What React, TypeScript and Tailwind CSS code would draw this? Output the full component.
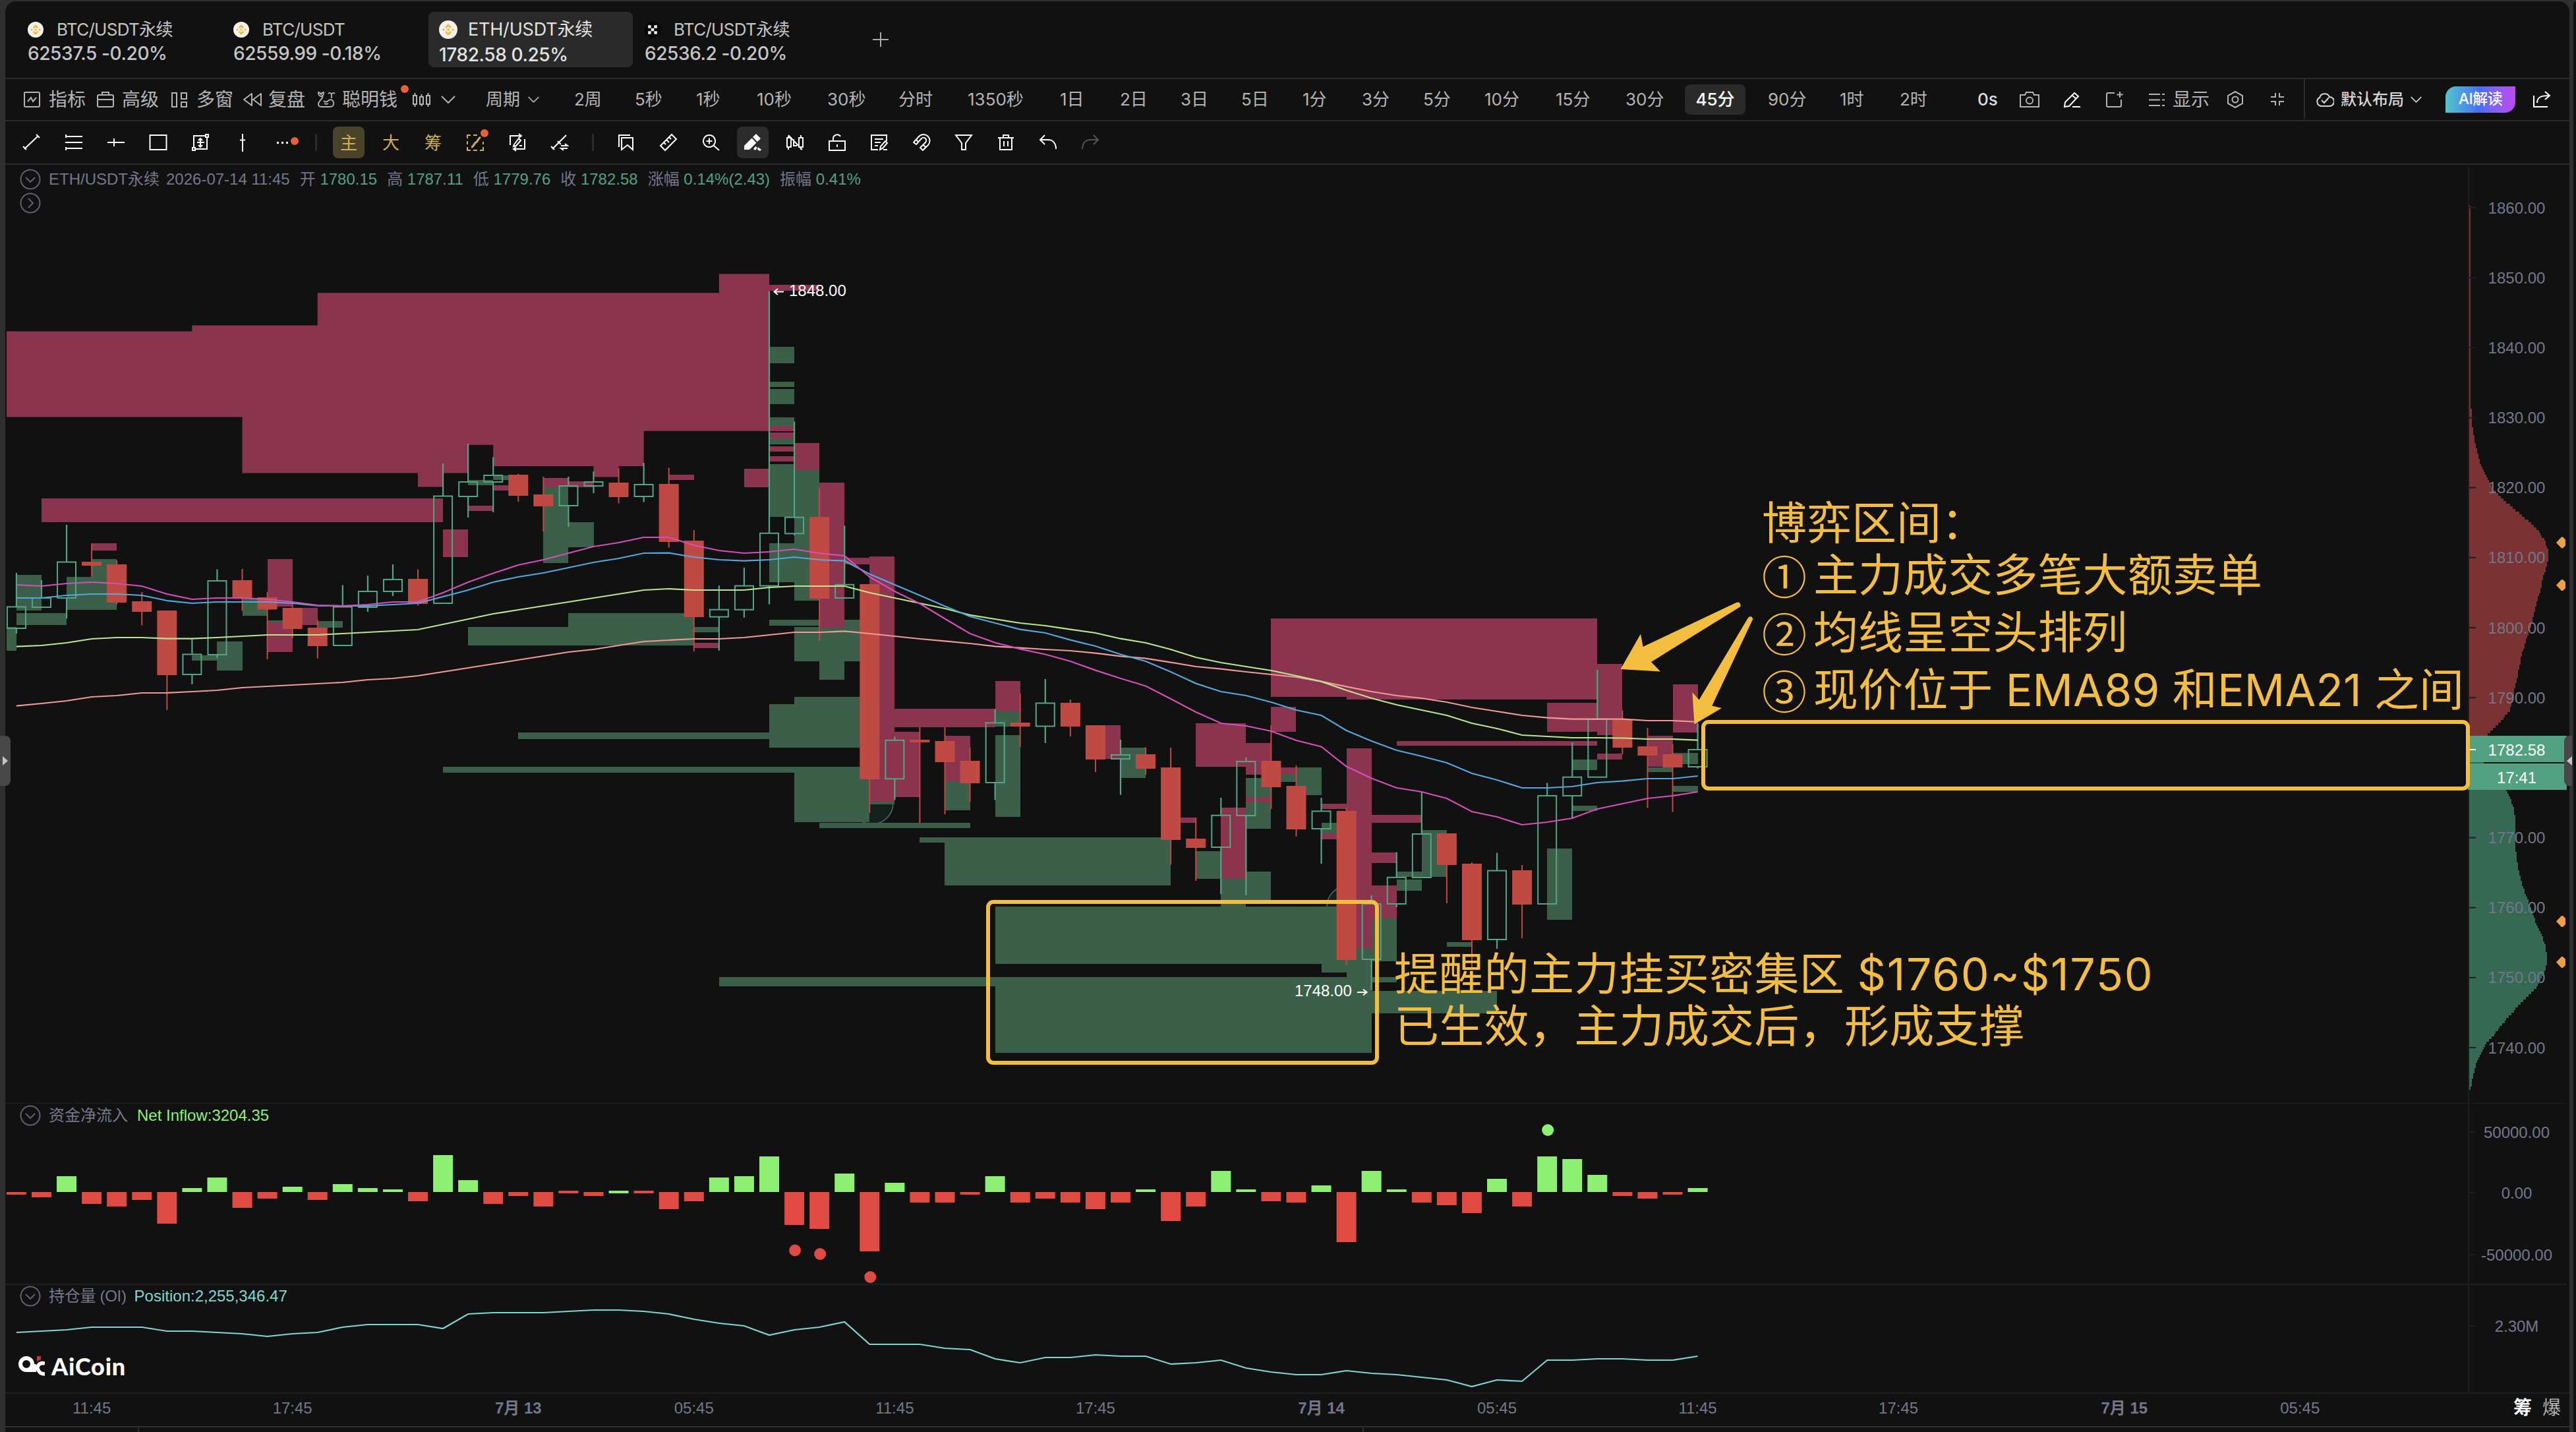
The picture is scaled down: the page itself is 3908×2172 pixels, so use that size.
import { Fragment, type ReactNode } from "react";

// Index -> x of the candle centre
const cx = (i: number) => 24.9 + i * 38.07;

const SELL = "#8a344f";
const BUY = "#3b5f49";

// [from, to, top, bottom]
type Block = [number, number, number, number];

const SELL_BLOCKS: Block[] = [
  [1, 17, 756, 792],
  [3, 4, 824, 834.6],
  [10, 11, 847.5, 919.5],
  [10, 11, 944, 989],
  [11, 12, 922, 948],
  [17, 18, 803, 845],
  [18, 19, 767, 775],
  [19, 20, 736, 744],
  [21, 22, 724.5, 738.6],
  [22, 23, 730, 738.6],
  [27, 28, 975, 983],
  [26, 27, 720, 728],
  [29, 30, 711, 739],
  [30, 32, 431.7, 441.4],
  [30, 31, 645.8, 653.8],
  [30, 31, 656, 665],
  [30, 31, 677, 685],
  [30, 31, 691.7, 699.7],
  [31, 32, 671.6, 713],
  [32, 33, 731.9, 951.7],
  [33, 34, 846, 856],
  [34, 35, 844, 1216],
  [35, 39, 1075, 1102.7],
  [39, 40, 1032.6, 1078.6],
  [35, 36, 1110, 1209.4],
  [37, 38, 1116.4, 1184.7],
  [43, 44, 1100.4, 1150.5],
  [46, 47, 1240, 1248],
  [47, 49, 1097, 1163],
  [49, 50, 1127, 1175],
  [50, 51, 1072.4, 1110],
  [50, 53, 937.5, 1057],
  [53, 63, 937.5, 1061],
  [48, 49, 1224.6, 1333],
  [49, 50, 1208.6, 1217],
  [50, 51, 1163.5, 1174],
  [52, 53, 1219, 1227],
  [52, 53, 1264, 1272.6],
  [53, 54, 1135.4, 1439],
  [54, 56, 1236, 1248],
  [54, 55, 1292.5, 1308.5],
  [54, 55, 1343, 1392.8],
  [55, 63, 1123.6, 1131.4],
  [61, 63, 1066, 1110],
  [63, 64, 1006.5, 1115],
  [63, 64, 1143.4, 1151.6],
  [65, 66, 1116, 1162.7],
  [66, 67, 1038, 1110.8],
];

const BUY_BLOCKS: Block[] = [
  [0, 1, 872, 926],
  [-0.38, 0, 951, 987],
  [0, 2, 930, 948],
  [2, 3, 874.5, 924.5],
  [3, 4, 847.5, 924.5],
  [7, 8, 993.5, 1002],
  [8, 9, 973, 1017],
  [9, 10, 907, 934],
  [10, 11, 940.7, 944],
  [12, 13, 941.6, 952],
  [18, 19, 728, 736],
  [19, 20, 720.7, 728],
  [21, 22, 738.6, 854],
  [22, 23, 792, 829.6],
  [18, 22, 951, 979],
  [22, 27, 930, 979],
  [27, 28, 951, 959],
  [30, 31, 525.8, 550.5],
  [30, 31, 579, 587],
  [30, 31, 590, 613],
  [30, 31, 632.6, 645.8],
  [30, 31, 665, 674],
  [30, 31, 703.7, 783.5],
  [30, 31, 823.7, 883.4],
  [31, 32, 713, 911],
  [30, 32, 940, 949],
  [31, 32, 951, 1003],
  [32, 33, 951.7, 1031],
  [33, 34, 940, 1003],
  [34, 35, 1216, 1220],
  [30, 31, 1068, 1133.7],
  [31, 34, 1056.7, 1133.7],
  [20, 30, 1110.7, 1120.5],
  [17, 31, 1163, 1171.5],
  [31, 34, 1163, 1247],
  [32, 38, 1248, 1256],
  [36, 37, 1269.7, 1278],
  [37, 46, 1269.7, 1343.4],
  [39, 40, 1078.6, 1102],
  [39, 40, 1114.7, 1239],
  [37, 38, 1184.7, 1229],
  [44, 45, 1134, 1180],
  [47, 48, 1290.5, 1332.7],
  [48, 49, 1333, 1375.5],
  [49, 50, 1180, 1208.6],
  [49, 50, 1217, 1256.6],
  [49, 50, 1322, 1366],
  [50, 51, 1174, 1186],
  [51, 52, 1163.5, 1205.7],
  [52, 53, 1248, 1264],
  [39, 53, 1375, 1461.6],
  [52, 53, 1461.6, 1475],
  [39, 53, 1482, 1597],
  [53, 54, 1439, 1597],
  [28, 39, 1482, 1496],
  [54, 55, 1392.8, 1457.8],
  [54, 55, 1482, 1490],
  [54, 59, 1503, 1537],
  [55, 56, 1322, 1330],
  [55, 56, 1334, 1351],
  [56, 57, 1259, 1330],
  [57, 58, 1429, 1436],
  [61, 62, 1286.6, 1394.6],
  [62, 63, 1151.6, 1167.7],
  [62, 63, 1222, 1229.7],
  [65, 66, 1163.6, 1171.4],
  [66, 67, 1142, 1158.5],
  [66, 67, 1192, 1201],
];

// [up, high, top, bottom, low]
const CANDLES: [0 | 1, number, number, number, number][] = [
  [1, 869, 920.5, 953, 961],
  [1, 880, 907, 921, 921],
  [1, 796, 852.5, 907, 938],
  [0, 824.5, 852, 858, 874.5],
  [0, 850, 856, 914, 917],
  [0, 898, 912, 928, 948.5],
  [0, 926, 926, 1024, 1077],
  [1, 969.5, 992.5, 1023, 1038],
  [1, 863.5, 881, 993, 998],
  [0, 863, 880, 907, 926.5],
  [0, 898, 906, 924.5, 1000],
  [0, 914, 922, 954, 968],
  [0, 940, 952, 980, 998.5],
  [1, 887.5, 920.5, 979, 979],
  [1, 873, 897, 921, 928],
  [1, 856, 879, 897, 904],
  [0, 863.5, 878, 916, 918.5],
  [1, 703, 752.5, 915, 915],
  [1, 673, 731, 753, 785],
  [1, 693.5, 721, 731, 777],
  [0, 718.5, 720, 752, 761],
  [0, 723, 750, 768, 806],
  [1, 723, 737, 767, 799],
  [1, 715, 731, 737, 748],
  [0, 710, 732, 754, 763.5],
  [1, 702, 735, 753, 761.5],
  [0, 709.5, 734, 822, 830.5],
  [0, 804, 820, 936, 988],
  [1, 888, 924.7, 935.6, 986.7],
  [1, 861, 888.6, 924.7, 936.8],
  [1, 441.4, 808.8, 888.6, 916.7],
  [1, 639.4, 784.7, 809.3, 812],
  [0, 740.5, 784, 908, 971.8],
  [1, 797.3, 886.8, 907, 907],
  [0, 886, 886, 1182, 1233],
  [1, 1117.6, 1122.8, 1181.3, 1213.4],
  [0, 1103, 1122, 1126, 1248],
  [0, 1103, 1124, 1156, 1235],
  [0, 1134, 1154, 1188, 1216],
  [1, 1075.7, 1096.4, 1187, 1213.5],
  [0, 1052, 1096, 1102, 1133],
  [1, 1030, 1066.5, 1101.5, 1127],
  [0, 1061, 1066, 1102, 1117],
  [0, 1100, 1100, 1152, 1171],
  [1, 1122, 1145, 1151, 1205.7],
  [0, 1133.5, 1144, 1166, 1175],
  [0, 1134, 1164, 1274, 1311.5],
  [0, 1240, 1272, 1286, 1336],
  [1, 1210, 1236.7, 1285, 1356],
  [1, 1148.5, 1155, 1237, 1358],
  [0, 1100, 1154, 1194, 1227],
  [0, 1161, 1192, 1258, 1268.7],
  [1, 1210, 1230.4, 1257, 1310],
  [0, 1224.6, 1230, 1456, 1463.6],
  [1, 1358, 1371, 1455, 1502],
  [1, 1292.5, 1330.8, 1371, 1376],
  [1, 1201, 1265, 1331, 1331],
  [0, 1264, 1264, 1312, 1370],
  [0, 1308, 1310, 1426, 1467],
  [1, 1293.5, 1320.6, 1425, 1439],
  [0, 1312, 1320, 1372, 1423],
  [1, 1187.5, 1207, 1371, 1371],
  [1, 1126, 1178.7, 1207, 1242],
  [1, 1016, 1091, 1178.7, 1178.7],
  [0, 1077.7, 1091, 1134, 1144],
  [0, 1104, 1132, 1146, 1225.6],
  [0, 1129, 1144, 1164, 1231.5],
  [1, 1097, 1137, 1163, 1165.5],
];

const AVERAGES: { color: string; ys: number[] }[] = [
  {
    color: "#f09a98",
    ys: [
      1070.6, 1067, 1063, 1057, 1055, 1051, 1051, 1049, 1047, 1043, 1041, 1039, 1037, 1035, 1031, 1029, 1025, 1019,
      1013, 1007, 1001, 995, 989, 985, 979, 973, 971, 969, 969, 967, 963, 959, 959, 957.4, 961, 965, 969, 972.4, 976,
      980.4, 982.7, 985, 987, 990.7, 995.4, 998.7, 1004.6, 1011, 1014.7, 1019, 1023, 1027, 1033.6, 1041.4, 1049, 1055,
      1059, 1065, 1073, 1079, 1085, 1088.7, 1090.6, 1090.6, 1090.6, 1093, 1093, 1095,
    ],
  },
  {
    color: "#bce58c",
    ys: [
      980.6, 979, 975, 969, 967, 967, 968.7, 968.7, 967, 965, 963, 963, 963, 961, 959, 957, 955, 947, 939, 931, 925,
      919, 913, 907, 901, 895, 893, 895, 895, 895, 891, 889, 889, 889, 899, 907, 915, 923, 932.8, 939, 945, 949, 954.6,
      960, 968.7, 975, 985, 997, 1005, 1011, 1017, 1025, 1033.6, 1047, 1059, 1069, 1077, 1085, 1097, 1105, 1115, 1117,
      1119, 1119, 1119.5, 1121, 1121, 1122.7,
    ],
  },
  {
    color: "#54a8de",
    ys: [
      907, 907, 903, 901, 901, 903, 911, 915, 913, 913, 913, 915, 918.6, 919, 919, 917, 915, 905, 895, 883, 875, 869,
      861, 853, 847, 839, 838.6, 845, 849, 850.7, 849, 845, 849, 850.7, 870.8, 887, 903, 919.6, 935, 945, 954.6, 960,
      970.6, 980, 992.5, 1003, 1019, 1036.6, 1049, 1055, 1065, 1077, 1085, 1108, 1124, 1138, 1147, 1157, 1173, 1183,
      1195, 1195, 1193, 1187, 1184.7, 1181, 1181, 1177,
    ],
  },
  {
    color: "#d64fb8",
    ys: [
      887, 889, 885, 883, 885, 889, 901, 909, 907, 907, 909, 913, 918, 919, 917, 913, 913, 899, 883, 869.5, 857, 849,
      839, 829, 823, 815, 815, 827, 835, 839, 837, 833, 839, 843, 875, 897, 915.5, 938.5, 961, 974.7, 984.4, 992.5,
      1003, 1016.6, 1029, 1040.4, 1060, 1080, 1097, 1101, 1109, 1123, 1132.5, 1162.6, 1180.5, 1195, 1201, 1211, 1231,
      1239, 1251, 1247, 1241, 1227, 1219, 1211, 1207, 1201,
    ],
  },
];

const INFLOW = [
  -4, -8, 24, -18, -22, -12, -48, 6, 22, -24, -10, 8, -12, 12, 6, 4, -14, 56, 18, -18, -6, -22, -2, -6, 2, -2, -26, -14,
  22, 24, 54, -50, -56, 28, -90, 14, -16, -16, -4, 24, -16, -10, -16, -26, -16, 4, -44, -22, 32, 4, -14, -16, 10, -76,
  32, 4, -16, -20, -32, 20, -22, 54, 50, 26, -6, -10, -4, 6,
];

const OPEN_INTEREST = [
  2021, 2019, 2017, 2013, 2013, 2013, 2019, 2019, 2021, 2023, 2027, 2023, 2021, 2013, 2009, 2009, 2009, 2015, 1993,
  1991, 1991, 1991, 1989, 1987, 1987, 1989, 1993, 2001, 2007, 2011, 2025, 2017, 2013, 2005, 2039, 2039, 2039, 2045,
  2047, 2061, 2067, 2059, 2059, 2055, 2057, 2057, 2069, 2067, 2063, 2075, 2081, 2085, 2085, 2079, 2083, 2085, 2089,
  2093, 2103, 2093, 2095, 2063, 2063, 2061, 2061, 2063, 2063, 2057,
];

// [y, width]
const SELL_PROFILE: [number, number][] = [
  [312, 2], [600, 2], [640, 4], [665, 8], [700, 16], [721, 26], [743, 38], [759, 55], [773, 72], [787, 88], [804, 105],
  [818, 115], [834, 120], [850, 119], [871, 113], [893, 108], [914, 102], [939, 96], [964, 88], [993, 79], [1021, 74],
  [1043, 69], [1075, 62], [1093, 47], [1105, 34], [1116, 26],
];
const BUY_PROFILE: [number, number][] = [
  [1156, 22], [1199, 58], [1213, 64], [1226, 68], [1243, 70], [1285, 70], [1312, 74], [1336, 79], [1358, 87], [1377, 94],
  [1399, 102], [1418, 111], [1435, 116], [1452, 118], [1469, 116], [1493, 104], [1510, 87], [1532, 67], [1551, 51],
  [1568, 37], [1583, 24], [1602, 14], [1620, 8], [1637, 4], [1653, 2],
];

const line = (ys: number[]) => ys.map((y, i) => `${cx(i).toFixed(1)},${y}`).join(" ");

// Turns the profile into a stepped outline hanging on the price axis
function profilePath(points: [number, number][]) {
  let d = `M3746 ${points[0][0]}`;
  const end = points[points.length - 1][0];
  for (let y = points[0][0]; y < end; y += 4) {
    const k = Math.max(1, points.findIndex((p) => p[0] > y));
    const [y0, w0] = points[k - 1];
    const [y1, w1] = points[k];
    const w = Math.round((w0 + ((w1 - w0) * (y - y0)) / (y1 - y0)) / 2) * 2;
    d += `H${3746 + w}V${Math.min(y + 4, end)}`;
  }
  return d + "H3746Z";
}

function Icon({ children, className = "" }: { children: ReactNode; className?: string }) {
  return (
    <svg
      viewBox="0 0 28 28"
      fill="none"
      stroke="currentColor"
      strokeWidth="2"
      className={`h-7 w-7 shrink-0 ${className}`}
    >
      {children}
    </svg>
  );
}

function Chevron({ className }: { className: string }) {
  return (
    <svg viewBox="0 0 22 12" fill="none" stroke="currentColor" strokeWidth="2" className={className}>
      <path d="M1 1 11 11 21 1" />
    </svg>
  );
}

function BinanceLogo({ className }: { className: string }) {
  return (
    <svg viewBox="0 0 28 28" className={className}>
      <circle cx="14" cy="14" r="14" fill="#f4f1ea" />
      <g fill="#eeb83c">
        <path d="m14 5 5 5-2 2-3-3-3 3-2-2zM14 23l5-5-2-2-3 3-3-3-2 2zM14 11.800l2.200 2.200-2.200 2.200-2.200-2.200zM7 12l2 2-2 2-2-2zM21 12l2 2-2 2-2-2z" />
      </g>
    </svg>
  );
}

function OkxLogo({ className }: { className: string }) {
  return (
    <svg viewBox="0 0 28 28" className={className}>
      <circle cx="14" cy="14" r="14" fill="#000" />
      <path d="M6 6h5.300v5.300H6zM16.700 6H22v5.300h-5.300zM11.300 11.300h5.400v5.400h-5.400zM6 16.700h5.300V22H6zM16.700 16.700H22V22h-5.300z" fill="#eee" />
    </svg>
  );
}

const TABS = [
  { name: "BTC/USDT永续", price: "62537.5 -0.20%", logo: "bn" },
  { name: "BTC/USDT", price: "62559.99 -0.18%", logo: "bn" },
  { name: "ETH/USDT永续", price: "1782.58 0.25%", logo: "bn", active: true },
  { name: "BTC/USDT永续", price: "62536.2 -0.20%", logo: "okx" },
];

function Tabs() {
  return (
    <div className="flex h-[118px] items-start gap-0.5 border-b-2 border-[#2b2b2b] pt-4 pl-[18px]">
      {TABS.map((tab, i) => (
        <div
          key={i}
          className={
            tab.active
              ? "flex h-[84px] w-[310px] flex-col justify-center gap-0.5 rounded-lg bg-[#2a2a2a] pt-2 pl-4 text-[#e2e2e2]"
              : "flex h-[84px] w-[310px] flex-col justify-center pt-1.5 pl-4 text-[#c4c4c4]"
          }
        >
          <div className={`flex items-center leading-9 ${tab.active ? "gap-4 text-[27px] tracking-[-0.2px]" : "gap-5 text-[26px] tracking-[-0.7px]"}`}>
            {tab.logo === "okx" ? (
              <OkxLogo className="h-6 w-6" />
            ) : (
              <BinanceLogo className={tab.active ? "h-7 w-7" : "h-6 w-6"} />
            )}
            <span>{tab.name}</span>
          </div>
          <div className="text-[28px] leading-9 font-medium tracking-[-0.4px]">{tab.price}</div>
        </div>
      ))}
      <div className="mt-[31px] ml-[50px] h-[22px] w-6 text-[#aaa]">
        <svg viewBox="0 0 24 22" stroke="currentColor" strokeWidth="2" className="h-full w-full">
          <path d="M12 0v22M0 11h24" />
        </svg>
      </div>
    </div>
  );
}

const MENU: { label: string; width: string; icon: ReactNode; dot?: boolean }[] = [
  {
    label: "指标",
    width: "w-[111px]",
    icon: <path d="M2 3h20a2 2 0 0 1 2 2v18a2 2 0 0 1-2 2H3a2 2 0 0 1-2-2V4a1 1 0 0 1 1-1zM6 17l5-6 3 6 5-6" />,
  },
  {
    label: "高级",
    width: "w-[113px]",
    icon: <path d="M3 7h20a2 2 0 0 1 2 2v14a2 2 0 0 1-2 2H3a2 2 0 0 1-2-2V9a2 2 0 0 1 2-2zM1 14h24M8 7V3h10v4" />,
  },
  { label: "多窗", width: "w-[109px]", icon: <path d="M1 4h7v21H1zM15 4h8v9h-8zM15 18h8v7h-8z" /> },
  { label: "复盘", width: "w-[112px]", icon: <path d="M13 5v18L1 14zM27 5v18l-12-9z" strokeLinejoin="round" /> },
  {
    label: "聪明钱",
    width: "w-[145px]",
    icon: (
      <path
        d="M2 3c2 0 4 2 4 4 0-2 2-4 4-4 0 4-2 6-4 6-3 0-4-3-4-6zM17 5c2-2 4-1 5 1 1-2 3-3 5-1M22 6v6M9 9c-1 5-7 7-7 12 0 3 2 4 5 4h13c4 0 6-3 5-7-1-3-4-5-7-3-3 3-6 3-8 1M11 20c2 1 4 1 6 0"
        strokeWidth="1.800"
      />
    ),
    dot: true,
  },
];

const PERIODS = [
  ["2周", "w-[92px]"],
  ["5秒", "w-[93px]"],
  ["1秒", "w-[92px]"],
  ["10秒", "w-[107px]"],
  ["30秒", "w-[108px]"],
  ["分时", "w-[105px]"],
  ["1350秒", "w-[140px]"],
  ["1日", "w-[91px]"],
  ["2日", "w-[92px]"],
  ["3日", "w-[92px]"],
  ["5日", "w-[93px]"],
  ["1分", "w-[90px]"],
  ["3分", "w-[93px]"],
  ["5分", "w-[93px]"],
  ["10分", "w-[108px]"],
  ["15分", "w-[106px]"],
  ["30分", "w-[106px]"],
  ["45分", "w-[110px]"],
  ["90分", "w-[109px]"],
  ["1时", "w-[91px]"],
  ["2时", "w-[118px]"],
];

function PeriodBar() {
  return (
    <div className="flex h-16 shrink-0 items-center border-b-2 border-[#2b2b2b] pb-px pl-7 text-[#b4b4b4]">
      {MENU.map((item) => (
        <div key={item.label} className={`relative flex shrink-0 items-center ${item.width}`}>
          <Icon className="mr-2.5">{item.icon}</Icon>
          <span className="text-[28px] leading-8 whitespace-nowrap">{item.label}</span>
          {item.dot && <i className="absolute -top-1.5 right-1.5 h-3 w-3 rounded-full bg-[#e8613a]" />}
        </div>
      ))}
      <div className="w-[43px]">
        <Icon>
          <path d="M1 8h5v13H1zM11 10h5v11h-5zM21 8h5v13h-5zM3.500 4v4M3.500 21v4M13.500 6v4M13.500 21v3M23.500 4v4M23.500 21v4" />
        </Icon>
      </div>
      <div className="w-[68px]">
        <Chevron className="h-3 w-[22px]" />
      </div>
      <span className="w-16 text-[26px]">周期</span>
      <div className="w-[70px]">
        <Chevron className="h-2.5 w-[17px]" />
      </div>
      {PERIODS.map(([label, width]) => (
        <div key={label} className={`shrink-0 text-[26px] whitespace-nowrap ${width}`}>
          {label === "45分" ? (
            <span className="-ml-4 flex h-[46px] w-[92px] items-center justify-center rounded-lg bg-[#2a2a2a] font-medium text-white">
              {label}
            </span>
          ) : (
            label
          )}
        </div>
      ))}
      <div className="w-[64px] text-[26px] font-medium text-[#dcdcdc]">0s</div>
      <div className="w-[66px]">
        <Icon className="w-[30px]">
          <path d="M0 7h7l2-4h10l2 4h7v18H0z" />
          <circle cx="14" cy="15.500" r="5" />
        </Icon>
      </div>
      <div className="w-[65px] text-white">
        <Icon>
          <path d="M17 4l6 5L9 24l-7 1 1-7zM14 8l6 5M14 25h12" />
        </Icon>
      </div>
      <div className="w-16">
        <Icon>
          <path d="M13 4H3a2 2 0 0 0-2 2v17a2 2 0 0 0 2 2h18a2 2 0 0 0 2-2v-9M21 2v9M16.500 6.500h9" />
        </Icon>
      </div>
      <div className="w-[37px]">
        <Icon>
          <path d="M1 6h17M1 14.500h17M1 23h17M21 6h4M21 14.500h4M21 23h4" />
        </Icon>
      </div>
      <span className="w-[82px] text-[28px]">显示</span>
      <div className="w-[66px]">
        <Icon>
          <path d="M13 2l11 6v12l-11 6L2 20V8z" />
          <circle cx="13" cy="14" r="4.500" />
        </Icon>
      </div>
      <div className="w-[51px]">
        <Icon>
          <path d="M1 10h7V4M14 4v6h7M1 17h7v6M14 23v-6h7" />
        </Icon>
      </div>
      <div className="flex h-full items-center border-l-2 border-[#2b2b2b] pl-4 text-[#d6d6d6]">
        <Icon>
          <path d="M8 24a7 7 0 0 1-2-13 8 8 0 0 1 15-1 7 7 0 0 1 0 14zM9 15l4 4 7-8" />
        </Icon>
        <span className="ml-2.5 text-[24px] font-medium">默认布局</span>
        <Chevron className="ml-2.5 h-2.5 w-[17px]" />
      </div>
      <div className="ml-9 flex h-10 w-[106px] items-center justify-center rounded-tl-2xl rounded-br-2xl bg-linear-to-r from-[#58c4c8] via-[#4a6af6] to-[#c044f0] text-[23px] font-medium tracking-[-0.5px] text-white">
        AI解读
      </div>
      <div className="ml-[27px] text-white">
        <Icon>
          <path d="M1 8v17h21M6 19c0-8 5-11 18-11M18 2l7 6-7 6" />
        </Icon>
      </div>
    </div>
  );
}

const DRAW_TOOLS: ReactNode[] = [
  <path d="M3 24 24 4M1 20l5 5M21 2l5 5" />,
  <path d="M1 5h26M1 14h26M1 23h26M2 2v5M2 21v5" />,
  <path d="M1 14h26M11 8v12" />,
  <path d="M1.500 3h25v22h-25z" />,
  <path d="M7 4h14M4 7v14M24 7v17H7M14 9v11M9 14h11M11 11l3-3 3 3M11 18l3 3 3-3M22 2h4v4h-4zM2 22h4v4H2zM4 7V4h5" />,
  <path d="M14 1v27M10 10.500h8" />,
];

const AI_TOOLS: ReactNode[] = [
  <>
    <path d="M2 8V3h5M11 3h6M2 12v5M2 21v5h5M11 26h6M21 26h5v-5M26 17v-4" />
    <path d="M8 21c4 0 4-6 7-7s3-6 7-8" strokeWidth="3" />
  </>,
  <path d="M3 18V4h17M16 1l4 3-4 3M25 9v15H8M12 27l-4-3 4-3M9 17l7-9 3 3-7 8-4 1zM17 19h4" />,
  <path d="M3 24 24 3M1 20l5 5M11 12l5 5M16 19h10l-4-3M26 23H16l4 3" />,
];

const EDIT_TOOLS: ReactNode[] = [
  <path d="M3 21V3h17M7 7h17v18l-8-7-9 7z" />,
  <path d="M19 2l7 7L9 26l-7-7zM15 6l3 3M11 10l4 4M7 14l3 3" />,
  <path d="M12 3a9 9 0 1 0 .1 0zM19 19l8 7M12 7.500v9M7.500 12h9" />,
  <g fill="currentColor" stroke="none">
    <path d="m19 1 7 7-5 5-7-7zM12.500 7.500l7 7L9 25H1v-6zM15 24l3-4 3 2-3 4zM22 21l5 4-2 2-4-2z" />
  </g>,
  <path d="M2 7v14h6V7zM12 9v10h5M20 7v14h6V7zM4 4v3M4 21v4M4 3l21 22M23 3v4M23 21v4" />,
  <path d="M2 12h24v14H2zM8 12V8a6 6 0 0 1 11-3M14 17v4" />,
  <path d="M25 12V3H2v22h10M7 9h13M7 14h9M7 19h5M15 25l1-5 7-8 3 3-7 8zM20 25h6" />,
  // magnet, tilted with its poles to the lower left
  <path
    d="M2 14 10 5a9.500 9.500 0 0 1 14 13l-8 8-4-4 8-8a4 4 0 0 0-6-6l-8 9zM6 10l4 4M16 17l4 4"
    strokeLinejoin="round"
  />,
  <path d="M2 3h24l-9 12v10h-6V15z" />,
  <path d="M2 7h24M5 7v18h18V7M10 7V3h8v4M11 12v8M17 12v8" />,
  <path d="M9 3 2 10l7 7M2 10h12c7 0 12 5 12 14" />,
];

function DrawBar() {
  return (
    <div className="flex h-[66px] shrink-0 items-center border-b-2 border-[#2b2b2b] pl-2 text-white">
      {DRAW_TOOLS.map((d, i) => (
        <div key={i} className="flex w-16 justify-center">
          <Icon>{d}</Icon>
        </div>
      ))}
      <div className="flex w-16 items-center justify-center gap-1 pl-2">
        <i className="h-[3px] w-[3px] bg-white" />
        <i className="h-[3px] w-[3px] bg-white" />
        <i className="h-[3px] w-[3px] bg-white" />
        <i className="-mt-1 h-3 w-3 rounded-full bg-[#e8613a]" />
      </div>
      <div className="mr-[16px] ml-[14px] h-[26px] w-[3px] bg-[#2b2b2b]" />
      {["主", "大", "筹"].map((t, i) => (
        <div key={t} className="flex w-16 justify-center text-[26px] text-[#d0b056]">
          <span
            className={
              i === 0 ? "flex h-12 w-12 items-center justify-center rounded-lg bg-[#4a4229]" : "flex h-12 w-12 items-center justify-center"
            }
          >
            {t}
          </span>
        </div>
      ))}
      {AI_TOOLS.map((d, i) => (
        <div key={i} className={`relative flex w-16 justify-center ${i === 0 ? "text-[#d0b056]" : ""}`}>
          <Icon>{d}</Icon>
          {i === 0 && <i className="absolute -top-1.5 right-3 h-3 w-3 rounded-full bg-[#e8613a]" />}
        </div>
      ))}
      <div className="mx-[17px] h-[26px] w-[3px] bg-[#2b2b2b]" />
      {EDIT_TOOLS.map((d, i) => (
        <div key={i} className="flex w-16 justify-center">
          <span className={i === 3 ? "flex h-12 w-12 items-center justify-center rounded-lg bg-[#2c2c2c]" : "flex h-12 w-12 items-center justify-center"}>
            <Icon>{d}</Icon>
          </span>
        </div>
      ))}
      <div className="flex w-16 justify-center text-[#555]">
        <Icon>
          <path d="m19 3 7 7-7 7M26 10H14C7 10 2 15 2 24" />
        </Icon>
      </div>
    </div>
  );
}

function Toggle({ right }: { right?: boolean }) {
  return (
    <svg viewBox="0 0 32 32" fill="none" stroke="#5d6070" strokeWidth="2" className="h-8 w-8 shrink-0">
      <circle cx="16" cy="16" r="14.500" />
      <path d={right ? "M13 9l7 7-7 7" : "M9 13l7 7 7-7"} />
    </svg>
  );
}

const PRICE_LABELS = [1860, 1850, 1840, 1830, 1820, 1810, 1800, 1790, 1770, 1760, 1750, 1740];
const priceY = (p: number) => 315 + (1860 - p) * 10.617;

const QUOTE = [
  ["开", "1780.15"],
  ["高", "1787.11"],
  ["低", "1779.76"],
  ["收", "1782.58"],
  ["涨幅", "0.14%(2.43)"],
  ["振幅", "0.41%"],
];

const NOTES = [
  ["①", "主力成交多笔大额卖单"],
  ["②", "均线呈空头排列"],
  ["③", "现价位于 EMA89 和EMA21 之间"],
];

function MainChart() {
  return (
    <div className="relative h-[1423px] shrink-0">
      <svg
        viewBox="8 250 3886 1423"
        className="block h-[1423px] w-[3886px] font-['Liberation_Sans','Noto_Sans_CJK_SC',sans-serif] text-[24px]"
      >
        <path
          d={`M10 502.600H${cx(7)}V493.400H${cx(12)}V444.300H${cx(28)}V415.600H${cx(30)}V653.800H${cx(25)}V707H${cx(24)}V723.500H${cx(23)}V707H${cx(19)}V674.800H${cx(18)}V717.500H${cx(17)}V738.600H${cx(16)}V717.500H${cx(9)}V632.600H10Z`}
          fill={SELL}
        />
        <g fill="#14201b" stroke="#45725e" strokeWidth="1.500">
          <circle cx="1323" cy="1218" r="32" />
          <circle cx="2044" cy="1375" r="31" />
        </g>
        <g shapeRendering="crispEdges">
          {SELL_BLOCKS.map(([a, b, t, bt], i) => (
            <rect key={i} x={cx(a)} y={t} width={cx(b) - cx(a)} height={bt - t} fill={SELL} />
          ))}
          {BUY_BLOCKS.map(([a, b, t, bt], i) => (
            <rect key={i} x={cx(a)} y={t} width={cx(b) - cx(a)} height={bt - t} fill={BUY} />
          ))}
        </g>
        {CANDLES.map(([up, high, top, bottom, low], i) => (
          <g key={i}>
            {up ? (
              <>
                <path d={`M${cx(i)} ${high}V${top}M${cx(i)} ${bottom}V${low}`} stroke="#52a585" strokeWidth="2.200" />
                <rect
                  x={cx(i) - 14}
                  y={top}
                  width="28"
                  height={Math.max(bottom - top, 1)}
                  fill="none"
                  stroke="#52a585"
                  strokeWidth="2"
                />
              </>
            ) : (
              <>
                <path d={`M${cx(i)} ${high}V${low}`} stroke="#bf4a43" strokeWidth="2" />
                <rect x={cx(i) - 15} y={top} width="30" height={bottom - top} fill="#bf4a43" />
              </>
            )}
          </g>
        ))}
        {AVERAGES.map((ma) => (
          <polyline key={ma.color} points={line(ma.ys)} fill="none" stroke={ma.color} strokeWidth="2.200" />
        ))}
        <g fill="#fff" stroke="none">
          <text x="1197" y="449">
            1848.00
          </text>
          <text x="1964" y="1511">
            1748.00
          </text>
        </g>
        <path d="M1189 442.500h-14M1180 438l-5.500 4.500 5.500 4.500M2059 1505h14M2068 1500.500l5.500 4.500-5.500 4.500" fill="none" stroke="#fff" strokeWidth="2" />

        <path d="M3745 253V1673" stroke="#1d1e22" strokeWidth="2" />
        <path d={profilePath(SELL_PROFILE)} fill="#7a3233" />
        <path d={profilePath(BUY_PROFILE)} fill="#366954" />
        {PRICE_LABELS.map((p) => (
          <Fragment key={p}>
            <path d={`M3746 ${priceY(p)}h10`} stroke="#1d1e22" strokeWidth="2" />
            <text x="3818" y={priceY(p) + 8.500} textAnchor="middle" fill="#74778a">
              {p}.00
            </text>
          </Fragment>
        ))}
        <rect x="3746" y="1116" width="148" height="40" fill="#52a183" />
        <rect x="3744" y="1158" width="150" height="40" fill="#52a183" />
        <path d="M3746 1137h10" stroke="#fff" strokeWidth="2" />
        <g fill="#fff" textAnchor="middle">
          <text x="3818" y="1146">
            1782.58
          </text>
          <text x="3818" y="1188">
            17:41
          </text>
        </g>
        <g fill="#f0a03f">
          {[823, 887.5, 1397.5, 1459.5].map((y) => (
            <path key={y} d={`M3878 ${y}l8-8.500h2l4 4v9l-4 4h-2z`} />
          ))}
        </g>

        <g fill="none" stroke="#f3bd40" strokeWidth="6">
          <rect x="1499" y="1368" width="590" height="244" rx="8" />
          <rect x="2584" y="1095" width="1160" height="101" rx="8" />
        </g>
        <g fill="#f3bd40">
          <path d="M2458.500 1015 2489 961.500 2492.500 981 2634 914Q2641 912 2640.600 920L2505 1004 2519 1018.500Z" />
          <path d="M2570.500 1098.500 2567.400 1050 2577.600 1061.500 2652 937Q2657 932 2659.300 939L2597.300 1070.500 2612 1074Z" />
        </g>
      </svg>

      <div className="absolute top-1.5 left-[22px] flex items-center font-['Liberation_Sans','Noto_Sans_CJK_SC',sans-serif] text-[24px] leading-8 text-[#74778a]">
        <Toggle />
        <span className="ml-3">ETH/USDT永续</span>
        <span className="ml-2.5">2026-07-14 11:45</span>
        {QUOTE.map(([k, v]) => (
          <span key={k} className="ml-[15px]">
            {k} <span className="text-[#52a183]">{v}</span>
          </span>
        ))}
      </div>
      <div className="absolute top-[42px] left-[22px]">
        <Toggle right />
      </div>

      <div className="absolute top-[501px] left-[2665px] text-[68px] leading-[84px] whitespace-nowrap text-[#f3bd40]">
        <div>博弈区间：</div>
        {NOTES.map(([n, text], i) => (
          <div key={n} className={`flex ${i === 0 ? "-mt-[5px]" : "mt-[3px]"}`}>
            <span className="w-[78px] font-['Noto_Sans_CJK_SC']">{n}</span>
            <span className="tracking-[0.1px]">{text}</span>
          </div>
        ))}
      </div>
      <div className="absolute top-[1188px] left-[2107px] text-[68px] leading-[79px] tracking-[0.3px] whitespace-nowrap text-[#f3bd40]">
        <div>
          提醒的主力挂买密集区 <span className="tracking-[1.6px]">$1760~$1750</span>
        </div>
        <div>已生效，主力成交后，形成支撑</div>
      </div>
    </div>
  );
}

function AxisLabels({ items }: { items: [string, number][] }) {
  return (
    <>
      {items.map(([label, y]) => (
        <Fragment key={label}>
          <path d={`M3745 ${y}h10`} stroke="#1d1e22" strokeWidth="2" />
          <text x="3818" y={y + 9} textAnchor="middle" fill="#74778a">
            {label}
          </text>
        </Fragment>
      ))}
    </>
  );
}

function InflowChart() {
  return (
    <div className="relative h-[274px] shrink-0">
      <svg viewBox="8 1673 3886 274" className="block h-[274px] w-[3886px] font-['Liberation_Sans'] text-[24px]">
        <path d="M8 1673H3894M3745 1673V1947" stroke="#1d1e22" strokeWidth="2" />
        {INFLOW.map((v, i) => {
          const flat = Math.abs(v) < 3;
          const h = flat ? 4 : Math.abs(v);
          const y = flat ? 1806 : v > 0 ? 1808 - h : 1808;
          return <rect key={i} x={cx(i) - 15} y={y} width="30" height={h} fill={v > 0 ? "#8df073" : "#df4a43"} />;
        })}
        <g fill="#df4a43">
          <circle cx={cx(31) + 1} cy="1896.500" r="9" />
          <circle cx={cx(32) + 1} cy="1902" r="9" />
          <circle cx={cx(34) + 1} cy="1937" r="9" />
        </g>
        <circle cx={cx(61) + 1} cy="1714" r="9" fill="#8df073" />
        <AxisLabels items={[["50000.00", 1717], ["0.00", 1809], ["-50000.00", 1903]]} />
      </svg>
      <div className="absolute top-[3px] left-[22px] flex items-center font-['Liberation_Sans','Noto_Sans_CJK_SC',sans-serif] text-[24px] leading-8 text-[#74778a]">
        <Toggle />
        <span className="ml-3">资金净流入</span>
        <span className="ml-3.5 text-[#8df073]">Net Inflow:3204.35</span>
      </div>
    </div>
  );
}

function OpenInterestChart() {
  return (
    <div className="relative h-[165px] shrink-0">
      <svg viewBox="8 1947 3886 165" className="block h-[165px] w-[3886px] font-['Liberation_Sans'] text-[24px]">
        <path d="M8 1948H3894M3745 1947V2112" stroke="#1d1e22" strokeWidth="2" />
        <polyline points={line(OPEN_INTEREST)} fill="none" stroke="#7ed8d0" strokeWidth="2.200" />
        <AxisLabels items={[["2.30M", 2011]]} />
      </svg>
      <div className="absolute top-[3px] left-[22px] flex items-center font-['Liberation_Sans','Noto_Sans_CJK_SC',sans-serif] text-[24px] leading-8 text-[#74778a]">
        <Toggle />
        <span className="ml-3 tracking-[-0.3px]">持仓量 (OI)</span>
        <span className="ml-3 text-[#7ed8d0]">Position:2,255,346.47</span>
      </div>
      <div className="absolute top-[107px] left-5 flex items-center gap-2.5 text-white">
        <svg viewBox="0 0 40 32" fill="none" className="h-8 w-10">
          <circle cx="12" cy="13" r="9" stroke="#fff" strokeWidth="6" />
          <path d="M12 22h12V13" stroke="#fff" strokeWidth="6" />
          <path d="M40 12c-9-2-13 5-10 10 2 5 6 6 10 6" stroke="#fff" strokeWidth="5.500" />
          <path d="M28 1h6v5l-6 3z" fill="#c8372c" />
        </svg>
        <span className="font-['Lato'] text-[36px] leading-9 font-black tracking-[0.8px]">AiCoin</span>
      </div>
    </div>
  );
}

// Label and the candle it stands under
const TIMES: [string, number][] = [
  ["11:45", 3],
  ["17:45", 11],
  ["7月 13", 20],
  ["05:45", 27],
  ["11:45", 35],
  ["17:45", 43],
  ["7月 14", 52],
  ["05:45", 59],
  ["11:45", 67],
  ["17:45", 75],
  ["7月 15", 84],
  ["05:45", 91],
];

function TimeAxis() {
  return (
    <div className="relative flex h-[51px] shrink-0 items-center justify-end gap-4 border-t-2 border-[#1d1e22] pr-[13px] pb-2 text-[28px]">
      {TIMES.map(([label, i]) => (
        <span
          key={i}
          className={`absolute top-1.5 w-32 -translate-x-1/2 text-center font-['Liberation_Sans','Noto_Sans_CJK_SC',sans-serif] text-[24px] leading-8 text-[#74778a] ${label.includes("月") ? "font-bold" : ""}`}
          style={{ left: cx(i) - 8 }}
        >
          {label}
        </span>
      ))}
      <span className="font-bold text-white">筹</span>
      <span className="text-[#b4b4b4]">爆</span>
    </div>
  );
}

export default function App() {
  return (
    <div className="relative flex h-[2172px] w-[3908px] overflow-hidden bg-[#2f2f2f] pt-0.5 font-['Inter','Noto_Sans_CJK_SC',sans-serif]">
      <div className="ml-2 flex w-[3890px] shrink-0 flex-col overflow-hidden rounded-t-2xl bg-[#111]">
        <Tabs />
        <PeriodBar />
        <DrawBar />
        <MainChart />
        <InflowChart />
        <OpenInterestChart />
        <TimeAxis />
        <div className="flex h-[9px] shrink-0 border-t-2 border-[#2f2f2f]">
          <div className="w-[203px] border-r-2 border-[#2f2f2f]" />
          <div className="w-[1858px] border-r-2 border-[#2f2f2f]" />
        </div>
      </div>
      <div className="ml-1.5 w-1 rounded-tl-lg bg-[#111]" />

      <div className="absolute top-[1116px] left-0 flex h-[76px] w-4 items-center justify-center rounded-r-lg bg-[#484848]">
        <svg viewBox="0 0 8 14" className="h-3.5 w-2">
          <path d="M0 0l8 7-8 7z" fill="#c4c4c4" />
        </svg>
      </div>
      <div className="absolute top-[1116px] left-[3890px] flex h-[76px] w-3 items-center justify-end rounded-l-lg bg-[#484848]">
        <svg viewBox="0 0 8 14" className="h-3.5 w-2">
          <path d="M8 0 0 7l8 7z" fill="#c4c4c4" />
        </svg>
      </div>
    </div>
  );
}
